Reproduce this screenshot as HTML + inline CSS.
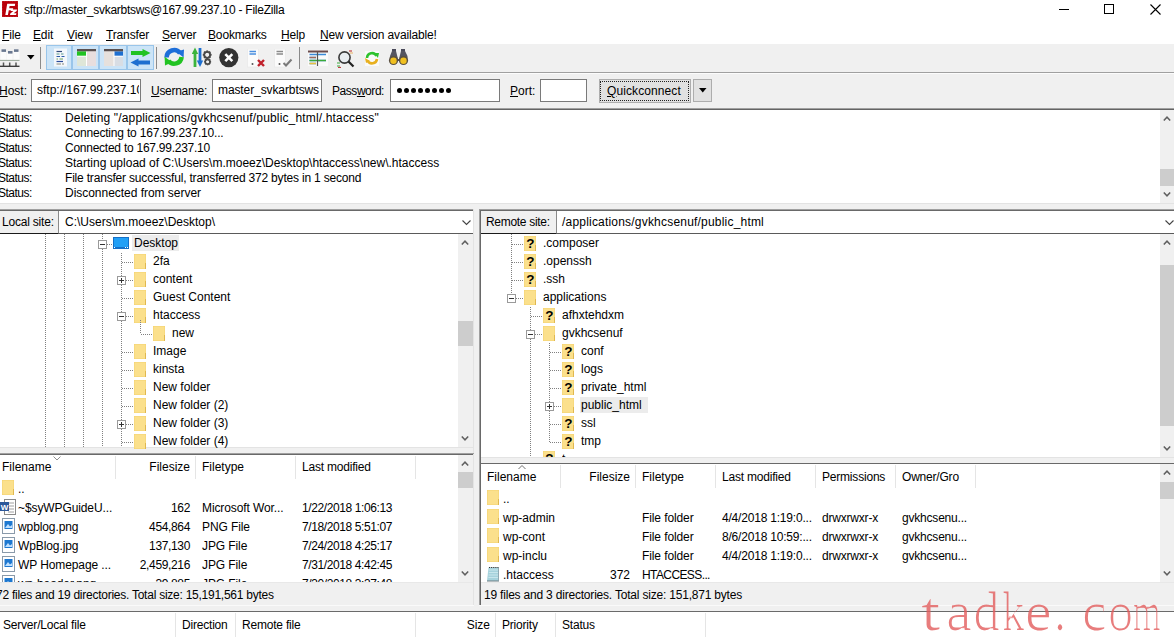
<!DOCTYPE html><html><head><meta charset="utf-8"><style>
body{margin:0;width:1174px;height:643px;overflow:hidden;position:relative;background:#f0f0f0;font-family:"Liberation Sans",sans-serif;font-size:12px;color:#000}
.a{position:absolute}
.t{position:absolute;white-space:nowrap;line-height:12px;font-size:12px}
u{text-decoration:underline;text-underline-offset:1px;text-decoration-thickness:1px}
</style></head><body>
<div class="a" style="left:0px;top:0px;width:1174px;height:44px;background:#fff"></div>
<svg class="a" style="left:2px;top:1px" width="16" height="16" viewBox="0 0 16 16"><rect x="0" y="0" width="16" height="16" fill="#b8000a"/><rect x="0.5" y="0.5" width="15" height="15" fill="none" stroke="#d04040" stroke-width="0.6" stroke-dasharray="0.8 0.8"/><path d="M5.2 2.8 H13.2 L12.8 5 H7.6 L7.2 7.2 H11.2 L10.8 9.3 H6.8 L5.9 14 H3.3Z" fill="#fff"/><path d="M9 8.4 H15 L14.7 10 L11.6 12.3 H14.4 L14.1 14 H8 L8.3 12.4 L11.4 10 H8.7Z" fill="#fff"/></svg>
<div class="t" style="left:24px;top:4px;letter-spacing:-0.25px">sftp://master_svkarbtsws@167.99.237.10 - FileZilla</div>
<div class="a" style="left:1059px;top:9px;width:10px;height:1px;background:#000"></div>
<div class="a" style="left:1104px;top:4px;width:8px;height:8px;border:1px solid #000"></div>
<svg class="a" style="left:1150px;top:4px" width="11" height="11" viewBox="0 0 11 11"><path d="M0.5 0.5L10.5 10.5M10.5 0.5L0.5 10.5" stroke="#000" stroke-width="1.1"/></svg>
<div class="t" style="left:2px;top:29px;letter-spacing:-0.15px"><u>F</u>ile</div>
<div class="t" style="left:33px;top:29px;letter-spacing:-0.15px"><u>E</u>dit</div>
<div class="t" style="left:67px;top:29px;letter-spacing:-0.15px"><u>V</u>iew</div>
<div class="t" style="left:106px;top:29px;letter-spacing:-0.15px"><u>T</u>ransfer</div>
<div class="t" style="left:162px;top:29px;letter-spacing:-0.15px"><u>S</u>erver</div>
<div class="t" style="left:208px;top:29px;letter-spacing:-0.15px"><u>B</u>ookmarks</div>
<div class="t" style="left:281px;top:29px;letter-spacing:-0.15px"><u>H</u>elp</div>
<div class="t" style="left:320px;top:29px;letter-spacing:-0.15px"><u>N</u>ew version available!</div>
<div class="a" style="left:0px;top:44px;width:1174px;height:28px;background:#f0f0f0"></div>
<div class="a" style="left:0px;top:72px;width:1174px;height:1px;background:#a0a0a0"></div>
<svg class="a" style="left:0px;top:47px" width="21" height="21" viewBox="0 0 21 21">
<g fill="#fbfbfb"><rect x="0.5" y="4.5" width="6" height="9"/><rect x="7" y="6" width="5.5" height="8"/><rect x="13.5" y="4.5" width="6" height="9"/></g>
<g fill="#6a7890"><rect x="1.5" y="2.3" width="4.5" height="2.6"/><rect x="8" y="4" width="4.5" height="2.6"/><rect x="14" y="2.3" width="4.5" height="2.6"/></g>
<path d="M0 13.4H19.5" stroke="#8a9a8a" stroke-width="0.9"/>
<path d="M3.5 15.5V19M9.7 15.5V19M16 15.5V19" stroke="#555" stroke-width="1.5"/>
<path d="M0 19.3H19.5" stroke="#333" stroke-width="1.3"/></svg>
<svg class="a" style="left:27px;top:55px" width="8" height="5" viewBox="0 0 8 5"><path d="M0 0H7.5L3.75 4.5Z" fill="#000"/></svg>
<div class="a" style="left:40px;top:47px;width:1px;height:22px;background:#8a8a8a"></div>
<div class="a" style="left:156px;top:47px;width:1px;height:22px;background:#8a8a8a"></div>
<div class="a" style="left:299px;top:47px;width:1px;height:22px;background:#8a8a8a"></div>
<div class="a" style="left:46px;top:45px;width:26px;height:25px;background:#cce4f7;box-sizing:border-box;border:1px solid #99c5ea"></div>
<div class="a" style="left:72px;top:45px;width:27px;height:25px;background:#cce4f7;box-sizing:border-box;border:1px solid #99c5ea"></div>
<div class="a" style="left:99px;top:45px;width:28px;height:25px;background:#cce4f7;box-sizing:border-box;border:1px solid #99c5ea"></div>
<div class="a" style="left:127px;top:45px;width:27px;height:25px;background:#cce4f7;box-sizing:border-box;border:1px solid #99c5ea"></div>
<svg class="a" style="left:53px;top:48px" width="15" height="19" viewBox="0 0 15 19"><rect x="1" y="0.5" width="13" height="18" fill="#f4f7fb"/>
<path d="M3.5 3.5H9" stroke="#304a7a" stroke-width="1.2"/>
<path d="M3.5 6H6.5M8 6H10.5" stroke="#5a9a8a" stroke-width="1.2"/>
<path d="M3.5 8.5H7M8.5 8.5H11.5" stroke="#2a5aa8" stroke-width="1.2"/>
<path d="M3.5 11H5M6.5 11H10" stroke="#6aa060" stroke-width="1.2"/>
<path d="M3.5 13.5H10" stroke="#2a4a9a" stroke-width="1.2"/>
<path d="M3.5 16H8M9 16H11" stroke="#8a8a7a" stroke-width="1.2"/></svg>
<svg class="a" style="left:77px;top:49px" width="19" height="17" viewBox="0 0 19 17"><rect x="0" y="0" width="19" height="17" fill="#e8e4e0"/>
<rect x="0" y="0" width="19" height="2.5" fill="#5a5050"/>
<rect x="0" y="2.5" width="9.5" height="4.5" fill="#22c322"/>
<rect x="0" y="7.5" width="9" height="9.5" fill="#dfe6d8"/>
<rect x="10" y="2.5" width="9" height="14.5" fill="#e8dede"/>
<path d="M9.5 2.5V17M0 7.2H9.5" stroke="#fff" stroke-width="1"/></svg>
<svg class="a" style="left:104px;top:49px" width="19" height="17" viewBox="0 0 19 17"><rect x="0" y="0" width="19" height="17" fill="#e6e2de"/>
<rect x="0" y="0" width="19" height="2.5" fill="#5a5050"/>
<rect x="10" y="2.5" width="9" height="4.5" fill="#1e6fd0"/>
<rect x="0" y="2.5" width="9.5" height="14.5" fill="#e6e0dc"/>
<rect x="10" y="7.5" width="9" height="9.5" fill="#d8dde4"/>
<path d="M10 2.5V17M10 7.2H19" stroke="#fff" stroke-width="1"/></svg>
<svg class="a" style="left:130px;top:49px" width="21" height="18" viewBox="0 0 21 18"><path d="M1 2H12.5V0L20.5 4L12.5 8V6H1Z" fill="#22c322"/>
<path d="M20 11.5H8.5V9.5L0.5 13.5L8.5 17.5V15.5H20Z" fill="#1e6fd0"/></svg>
<svg class="a" style="left:164px;top:47px" width="21" height="21" viewBox="0 0 21 21"><path d="M2.6 10.5 A7.4 7.4 0 0 1 16 6.2" stroke="#1e6fd9" stroke-width="4.6" fill="none"/>
<path d="M12.2 4.8 L20 2.6 L19.6 10.6Z" fill="#1e6fd9"/>
<path d="M17.6 10 A7.4 7.4 0 0 1 4.4 13.8" stroke="#22c322" stroke-width="4.6" fill="none"/>
<path d="M0.6 9.8 L1 18.6 L8.2 15.2Z" fill="#22c322"/></svg>
<svg class="a" style="left:192px;top:47px" width="20" height="21" viewBox="0 0 20 21"><path d="M3 20V5" stroke="#3cb43c" stroke-width="2.8"/><path d="M-0.2 7 L3 0.5 L6.2 7Z" fill="#3cb43c"/>
<path d="M8 1V15" stroke="#1e6fd0" stroke-width="2.8"/><path d="M4.8 13.5 L8 20 L11.2 13.5Z" fill="#1e6fd0"/>
<g transform="translate(15.2,7.8)" fill="#4a4a4a"><circle r="3" fill="none" stroke="#4a4a4a" stroke-width="1.8"/><rect x="-0.9" y="-4.4" width="1.8" height="2.2" transform="rotate(0)"/><rect x="-0.9" y="-4.4" width="1.8" height="2.2" transform="rotate(45)"/><rect x="-0.9" y="-4.4" width="1.8" height="2.2" transform="rotate(90)"/><rect x="-0.9" y="-4.4" width="1.8" height="2.2" transform="rotate(135)"/><rect x="-0.9" y="-4.4" width="1.8" height="2.2" transform="rotate(180)"/><rect x="-0.9" y="-4.4" width="1.8" height="2.2" transform="rotate(225)"/><rect x="-0.9" y="-4.4" width="1.8" height="2.2" transform="rotate(270)"/><rect x="-0.9" y="-4.4" width="1.8" height="2.2" transform="rotate(315)"/></g>
<g transform="translate(15.6,14.8) scale(0.8)" fill="#4a4a4a"><circle r="3" fill="none" stroke="#4a4a4a" stroke-width="2"/><rect x="-0.9" y="-4.4" width="1.8" height="2.2" transform="rotate(0)"/><rect x="-0.9" y="-4.4" width="1.8" height="2.2" transform="rotate(45)"/><rect x="-0.9" y="-4.4" width="1.8" height="2.2" transform="rotate(90)"/><rect x="-0.9" y="-4.4" width="1.8" height="2.2" transform="rotate(135)"/><rect x="-0.9" y="-4.4" width="1.8" height="2.2" transform="rotate(180)"/><rect x="-0.9" y="-4.4" width="1.8" height="2.2" transform="rotate(225)"/><rect x="-0.9" y="-4.4" width="1.8" height="2.2" transform="rotate(270)"/><rect x="-0.9" y="-4.4" width="1.8" height="2.2" transform="rotate(315)"/></g></svg>
<svg class="a" style="left:219px;top:48px" width="20" height="20" viewBox="0 0 20 20"><circle cx="9.8" cy="9.6" r="9.6" fill="#333"/>
<path d="M6.3 6.1L13.3 13.1M13.3 6.1L6.3 13.1" stroke="#fff" stroke-width="2.6"/></svg>
<svg class="a" style="left:247px;top:49px" width="19" height="19" viewBox="0 0 19 19"><rect x="0.5" y="0" width="11" height="18" fill="#fbfbfb" stroke="#e6e6e6" stroke-width="0.6"/>
<path d="M2.5 2.5H9M2.5 5H9" stroke="#4a8ee0" stroke-width="1.5"/>
<circle cx="5.5" cy="15" r="1" fill="#555"/>
<path d="M11 11L17 17M17 11L11 17" stroke="#c0202a" stroke-width="2.4"/></svg>
<svg class="a" style="left:274px;top:49px" width="19" height="19" viewBox="0 0 19 19"><rect x="0.5" y="0" width="11" height="18" fill="#fbfbfb" stroke="#e6e6e6" stroke-width="0.6"/>
<path d="M2.5 2.5H9M2.5 5H9" stroke="#8a8a8a" stroke-width="1.5"/>
<circle cx="5.5" cy="15" r="1" fill="#555"/>
<path d="M9.5 14L12 16.5L17.5 10.5" stroke="#7a7a7a" stroke-width="2" fill="none"/></svg>
<svg class="a" style="left:308px;top:50px" width="20" height="16" viewBox="0 0 20 16"><rect x="0" y="0" width="20" height="16" fill="#fafafa"/>
<rect x="0" y="0.5" width="20" height="2" fill="#6a4a4a"/>
<path d="M1.5 4.5H18M1.5 7.5H8M1.5 10.5H8M10 10.5H18M1.5 13.5H8" stroke-width="1.4" stroke="#3a8ad8"/>
<path d="M1.5 7.5H8" stroke="#a06a5a" stroke-width="1.4"/>
<path d="M1.5 10.5H18" stroke="#3aaa3a" stroke-width="1.4"/>
<path d="M1.5 13.5H8" stroke="#e8c040" stroke-width="1.6"/>
<path d="M9.5 2V16" stroke="#555" stroke-width="1.2"/></svg>
<svg class="a" style="left:336px;top:49px" width="20" height="19" viewBox="0 0 20 19"><circle cx="8.5" cy="8.5" r="5.6" fill="#e8ecf0" stroke="#3a3a3a" stroke-width="1.6"/>
<path d="M12.5 12.5L17.5 17.5" stroke="#222" stroke-width="2.2"/>
<path d="M1 14H4M1 17H4" stroke="#3aaa3a" stroke-width="1.2"/><path d="M2 18.5H5" stroke="#c04040" stroke-width="1.2"/>
<path d="M13 2H16" stroke="#c04040" stroke-width="1.2"/><path d="M14 4H17" stroke="#e8b060" stroke-width="1"/></svg>
<svg class="a" style="left:364px;top:50px" width="16" height="17" viewBox="0 0 16 17"><rect x="1" y="1" width="14" height="15" fill="#fafafa"/>
<path d="M3 8 A5 5 0 0 1 12.5 6" stroke="#2ec22e" stroke-width="2.6" fill="none"/>
<path d="M10 3L15 3L14 8Z" fill="#2ec22e"/>
<path d="M13 9 A5 5 0 0 1 3.5 10.5" stroke="#e8b020" stroke-width="2.6" fill="none"/>
<path d="M1 8L2 13L6 11Z" fill="#e8b020"/></svg>
<svg class="a" style="left:388px;top:49px" width="21" height="17" viewBox="0 0 21 17"><path d="M4 0H8V8H4Z" fill="#4a4a5a"/><path d="M13 0H17V8H13Z" fill="#4a4a5a"/>
<path d="M2 7L4 2H8L10 10H11L13 2H17L19.5 7V12H1.5Z" fill="#555560"/>
<circle cx="5.5" cy="11.5" r="4.6" fill="#5a5040"/><circle cx="15.5" cy="11.5" r="4.6" fill="#5a5040"/>
<circle cx="5.5" cy="11.8" r="3.2" fill="#f0c020"/><circle cx="15.5" cy="11.8" r="3.2" fill="#f0c020"/></svg>
<div class="a" style="left:0px;top:73px;width:1174px;height:35px;background:#f0f0f0"></div>
<div class="a" style="left:0px;top:73px;width:1174px;height:1px;background:#fcfcfc"></div>
<div class="a" style="left:0px;top:108px;width:1174px;height:1px;background:#a0a0a0"></div>
<div class="a" style="left:0px;top:109px;width:1174px;height:1px;background:#646464"></div>
<div class="t" style="left:-1px;top:85px;"><u>H</u>ost:</div>
<div class="a" style="left:31px;top:79px;width:110px;height:23px;background:#fff;box-sizing:border-box;border:1px solid #7a7a7a"></div>
<div class="a" style="left:32px;top:80px;width:107px;height:21px;overflow:hidden"><div class="t" style="left:5px;top:4px;">sftp://167.99.237.10</div></div>
<div class="t" style="left:151px;top:85px;letter-spacing:-0.3px"><u>U</u>sername:</div>
<div class="a" style="left:212px;top:79px;width:110px;height:23px;background:#fff;box-sizing:border-box;border:1px solid #7a7a7a"></div>
<div class="a" style="left:213px;top:80px;width:107px;height:21px;overflow:hidden"><div class="t" style="left:5px;top:4px;letter-spacing:-0.1px">master_svkarbtsws</div></div>
<div class="t" style="left:332px;top:85px;letter-spacing:-0.45px">Pass<u>w</u>ord:</div>
<div class="a" style="left:390px;top:79px;width:110px;height:23px;background:#fff;box-sizing:border-box;border:1px solid #7a7a7a"></div>
<div class="a" style="left:397px;top:88px;width:5px;height:5px;background:#000;border-radius:50%"></div>
<div class="a" style="left:404px;top:88px;width:5px;height:5px;background:#000;border-radius:50%"></div>
<div class="a" style="left:411px;top:88px;width:5px;height:5px;background:#000;border-radius:50%"></div>
<div class="a" style="left:418px;top:88px;width:5px;height:5px;background:#000;border-radius:50%"></div>
<div class="a" style="left:425px;top:88px;width:5px;height:5px;background:#000;border-radius:50%"></div>
<div class="a" style="left:432px;top:88px;width:5px;height:5px;background:#000;border-radius:50%"></div>
<div class="a" style="left:439px;top:88px;width:5px;height:5px;background:#000;border-radius:50%"></div>
<div class="a" style="left:446px;top:88px;width:5px;height:5px;background:#000;border-radius:50%"></div>
<div class="t" style="left:510px;top:85px;"><u>P</u>ort:</div>
<div class="a" style="left:540px;top:79px;width:47px;height:23px;background:#fff;box-sizing:border-box;border:1px solid #7a7a7a"></div>
<div class="a" style="left:599px;top:79px;width:92px;height:24px;background:#e1e1e1;box-sizing:border-box;border:1px solid #adadad"></div>
<div class="a" style="left:600px;top:81px;width:89px;height:20px;box-sizing:border-box;border:1px dotted #222"></div>
<div class="t" style="left:607px;top:85px;letter-spacing:0.1px"><u>Q</u>uickconnect</div>
<div class="a" style="left:693px;top:79px;width:19px;height:23px;background:#e1e1e1;box-sizing:border-box;border:1px solid #adadad"></div>
<svg class="a" style="left:699px;top:88px" width="8" height="5" viewBox="0 0 8 5"><path d="M0 0H7.5L3.75 4.5Z" fill="#000"/></svg>
<div class="a" style="left:0px;top:110px;width:1174px;height:93px;background:#fff"></div>
<div class="a" style="left:0px;top:203px;width:1174px;height:1px;background:#e3e3e3"></div>
<div class="t" style="left:-2px;top:112px;letter-spacing:-0.5px">Status:</div>
<div class="t" style="left:65px;top:112px;letter-spacing:0.16px">Deleting &quot;/applications/gvkhcsenuf/public_html/.htaccess&quot;</div>
<div class="t" style="left:-2px;top:127px;letter-spacing:-0.5px">Status:</div>
<div class="t" style="left:65px;top:127px;letter-spacing:-0.19px">Connecting to 167.99.237.10...</div>
<div class="t" style="left:-2px;top:142px;letter-spacing:-0.5px">Status:</div>
<div class="t" style="left:65px;top:142px;letter-spacing:-0.25px">Connected to 167.99.237.10</div>
<div class="t" style="left:-2px;top:157px;letter-spacing:-0.5px">Status:</div>
<div class="t" style="left:65px;top:157px;letter-spacing:0px">Starting upload of C:\Users\m.moeez\Desktop\htaccess\new\.htaccess</div>
<div class="t" style="left:-2px;top:172px;letter-spacing:-0.5px">Status:</div>
<div class="t" style="left:65px;top:172px;letter-spacing:-0.19px">File transfer successful, transferred 372 bytes in 1 second</div>
<div class="t" style="left:-2px;top:187px;letter-spacing:-0.5px">Status:</div>
<div class="t" style="left:65px;top:187px;letter-spacing:-0.03px">Disconnected from server</div>
<div class="a" style="left:1160px;top:110px;width:15px;height:93px;background:#f0f0f0"></div>
<div class="a" style="left:1160px;top:169px;width:15px;height:17px;background:#cdcdcd"></div>
<svg class="a" style="left:1163px;top:116px" width="8" height="5" viewBox="0 0 8 5"><path d="M0.8 4.5L4 1.2L7.2 4.5" stroke="#606060" stroke-width="1.5" fill="none"/></svg>
<svg class="a" style="left:1163px;top:192px" width="8" height="5" viewBox="0 0 8 5"><path d="M0.8 0.5L4 3.8L7.2 0.5" stroke="#606060" stroke-width="1.5" fill="none"/></svg>
<div class="a" style="left:0px;top:209px;width:474px;height:1px;background:#a0a0a0"></div>
<div class="a" style="left:0px;top:210px;width:474px;height:1px;background:#696969"></div>
<div class="a" style="left:479px;top:209px;width:695px;height:1px;background:#a0a0a0"></div>
<div class="a" style="left:480px;top:210px;width:694px;height:1px;background:#696969"></div>
<div class="a" style="left:479px;top:209px;width:1px;height:396px;background:#a0a0a0"></div>
<div class="a" style="left:480px;top:210px;width:1px;height:395px;background:#696969"></div>
<div class="a" style="left:0px;top:211px;width:58px;height:22px;background:#f0f0f0"></div>
<div class="a" style="left:58px;top:211px;width:415px;height:22px;background:#fff"></div>
<div class="a" style="left:0px;top:233px;width:58px;height:1px;background:#1a1a1a"></div>
<div class="a" style="left:58px;top:233px;width:415px;height:1px;background:#5a5a5a"></div>
<div class="a" style="left:58px;top:211px;width:1px;height:22px;background:#8a8a8a"></div>
<div class="t" style="left:2px;top:216px;letter-spacing:-0.2px">Local site:</div>
<div class="t" style="left:65px;top:216px;">C:\Users\m.moeez\Desktop\</div>
<svg class="a" style="left:462px;top:220px" width="9" height="6" viewBox="0 0 9 6"><path d="M0.5 0.5L4.5 4.5L8.5 0.5" stroke="#444" stroke-width="1.1" fill="none"/></svg>
<div class="a" style="left:473px;top:209px;width:1px;height:396px;background:#e3e3e3"></div>
<div class="a" style="left:481px;top:211px;width:75px;height:22px;background:#f0f0f0"></div>
<div class="a" style="left:556px;top:211px;width:618px;height:22px;background:#fff"></div>
<div class="a" style="left:481px;top:233px;width:75px;height:1px;background:#1a1a1a"></div>
<div class="a" style="left:556px;top:233px;width:618px;height:1px;background:#5a5a5a"></div>
<div class="a" style="left:556px;top:211px;width:1px;height:22px;background:#8a8a8a"></div>
<div class="t" style="left:486px;top:216px;letter-spacing:-0.3px">Remote site:</div>
<div class="t" style="left:562px;top:216px;letter-spacing:0.2px">/applications/gvkhcsenuf/public_html</div>
<svg class="a" style="left:1165px;top:220px" width="9" height="6" viewBox="0 0 9 6"><path d="M0.5 0.5L4.5 4.5L8.5 0.5" stroke="#444" stroke-width="1.1" fill="none"/></svg>
<div class="a" style="left:0px;top:234px;width:473px;height:213px;background:#fff"></div>
<div class="a" style="left:0px;top:447px;width:474px;height:1px;background:#e3e3e3"></div>
<div class="a" style="left:45px;top:234px;width:1px;height:213px;background-image:linear-gradient(#808080 50%,transparent 50%);background-size:1px 2px"></div>
<div class="a" style="left:64px;top:234px;width:1px;height:213px;background-image:linear-gradient(#808080 50%,transparent 50%);background-size:1px 2px"></div>
<div class="a" style="left:83px;top:234px;width:1px;height:213px;background-image:linear-gradient(#808080 50%,transparent 50%);background-size:1px 2px"></div>
<div class="a" style="left:102px;top:234px;width:1px;height:6px;background-image:linear-gradient(#808080 50%,transparent 50%);background-size:1px 2px"></div>
<div class="a" style="left:102px;top:249px;width:1px;height:198px;background-image:linear-gradient(#808080 50%,transparent 50%);background-size:1px 2px"></div>
<svg class="a" style="left:98px;top:240px" width="9" height="9" viewBox="0 0 9 9"><rect x="0.5" y="0.5" width="8" height="8" fill="#fff" stroke="#9a9a9a"/><path d="M2 4.5H7" stroke="#333"/></svg>
<div class="a" style="left:107px;top:244px;width:6px;height:1px;background-image:linear-gradient(90deg,#808080 50%,transparent 50%);background-size:2px 1px"></div>
<svg class="a" style="left:113px;top:237px" width="16" height="12" viewBox="0 0 16 12"><rect x="0" y="0" width="16" height="12" fill="#1570c8"/><rect x="1" y="1" width="14" height="9" fill="#22a0f6"/><rect x="1" y="10" width="1" height="1" fill="#fff"/><rect x="12" y="10" width="1" height="1" fill="#fff"/><rect x="14" y="10" width="1" height="1" fill="#fff"/></svg>
<div class="a" style="left:132px;top:235px;width:47px;height:16px;background:#ececec"></div>
<div class="t" style="left:134px;top:237px;">Desktop</div>
<div class="a" style="left:121px;top:253px;width:1px;height:194px;background-image:linear-gradient(#808080 50%,transparent 50%);background-size:1px 2px"></div>
<div class="a" style="left:122px;top:262px;width:11px;height:1px;background-image:linear-gradient(90deg,#808080 50%,transparent 50%);background-size:2px 1px"></div>
<svg class="a" style="left:134px;top:254px" width="12" height="15" viewBox="0 0 12 15"><rect x="0" y="0" width="12" height="15" fill="#fbe08c"/><rect x="0" y="0" width="12" height="15" fill="none" stroke="#f2cf6a" stroke-width="0.8"/><path d="M11.5 9V15" stroke="#e0b850" stroke-width="1"/></svg>
<div class="t" style="left:153px;top:255px;">2fa</div>
<svg class="a" style="left:117px;top:276px" width="9" height="9" viewBox="0 0 9 9"><rect x="0.5" y="0.5" width="8" height="8" fill="#fff" stroke="#9a9a9a"/><path d="M2 4.5H7" stroke="#333"/><path d="M4.5 2V7" stroke="#333"/></svg>
<div class="a" style="left:126px;top:280px;width:7px;height:1px;background-image:linear-gradient(90deg,#808080 50%,transparent 50%);background-size:2px 1px"></div>
<svg class="a" style="left:134px;top:272px" width="12" height="15" viewBox="0 0 12 15"><rect x="0" y="0" width="12" height="15" fill="#fbe08c"/><rect x="0" y="0" width="12" height="15" fill="none" stroke="#f2cf6a" stroke-width="0.8"/><path d="M11.5 9V15" stroke="#e0b850" stroke-width="1"/></svg>
<div class="t" style="left:153px;top:273px;">content</div>
<div class="a" style="left:122px;top:298px;width:11px;height:1px;background-image:linear-gradient(90deg,#808080 50%,transparent 50%);background-size:2px 1px"></div>
<svg class="a" style="left:134px;top:290px" width="12" height="15" viewBox="0 0 12 15"><rect x="0" y="0" width="12" height="15" fill="#fbe08c"/><rect x="0" y="0" width="12" height="15" fill="none" stroke="#f2cf6a" stroke-width="0.8"/><path d="M11.5 9V15" stroke="#e0b850" stroke-width="1"/></svg>
<div class="t" style="left:153px;top:291px;">Guest Content</div>
<svg class="a" style="left:117px;top:312px" width="9" height="9" viewBox="0 0 9 9"><rect x="0.5" y="0.5" width="8" height="8" fill="#fff" stroke="#9a9a9a"/><path d="M2 4.5H7" stroke="#333"/></svg>
<div class="a" style="left:126px;top:316px;width:7px;height:1px;background-image:linear-gradient(90deg,#808080 50%,transparent 50%);background-size:2px 1px"></div>
<svg class="a" style="left:134px;top:308px" width="12" height="15" viewBox="0 0 12 15"><rect x="0" y="0" width="12" height="15" fill="#fbe08c"/><rect x="0" y="0" width="12" height="15" fill="none" stroke="#f2cf6a" stroke-width="0.8"/><path d="M11.5 9V15" stroke="#e0b850" stroke-width="1"/></svg>
<div class="t" style="left:153px;top:309px;">htaccess</div>
<div class="a" style="left:141px;top:334px;width:11px;height:1px;background-image:linear-gradient(90deg,#808080 50%,transparent 50%);background-size:2px 1px"></div>
<svg class="a" style="left:153px;top:326px" width="12" height="15" viewBox="0 0 12 15"><rect x="0" y="0" width="12" height="15" fill="#fbe08c"/><rect x="0" y="0" width="12" height="15" fill="none" stroke="#f2cf6a" stroke-width="0.8"/><path d="M11.5 9V15" stroke="#e0b850" stroke-width="1"/></svg>
<div class="t" style="left:172px;top:327px;">new</div>
<div class="a" style="left:122px;top:352px;width:11px;height:1px;background-image:linear-gradient(90deg,#808080 50%,transparent 50%);background-size:2px 1px"></div>
<svg class="a" style="left:134px;top:344px" width="12" height="15" viewBox="0 0 12 15"><rect x="0" y="0" width="12" height="15" fill="#fbe08c"/><rect x="0" y="0" width="12" height="15" fill="none" stroke="#f2cf6a" stroke-width="0.8"/><path d="M11.5 9V15" stroke="#e0b850" stroke-width="1"/></svg>
<div class="t" style="left:153px;top:345px;">Image</div>
<div class="a" style="left:122px;top:370px;width:11px;height:1px;background-image:linear-gradient(90deg,#808080 50%,transparent 50%);background-size:2px 1px"></div>
<svg class="a" style="left:134px;top:362px" width="12" height="15" viewBox="0 0 12 15"><rect x="0" y="0" width="12" height="15" fill="#fbe08c"/><rect x="0" y="0" width="12" height="15" fill="none" stroke="#f2cf6a" stroke-width="0.8"/><path d="M11.5 9V15" stroke="#e0b850" stroke-width="1"/></svg>
<div class="t" style="left:153px;top:363px;">kinsta</div>
<div class="a" style="left:122px;top:388px;width:11px;height:1px;background-image:linear-gradient(90deg,#808080 50%,transparent 50%);background-size:2px 1px"></div>
<svg class="a" style="left:134px;top:380px" width="12" height="15" viewBox="0 0 12 15"><rect x="0" y="0" width="12" height="15" fill="#fbe08c"/><rect x="0" y="0" width="12" height="15" fill="none" stroke="#f2cf6a" stroke-width="0.8"/><path d="M11.5 9V15" stroke="#e0b850" stroke-width="1"/></svg>
<div class="t" style="left:153px;top:381px;">New folder</div>
<div class="a" style="left:122px;top:406px;width:11px;height:1px;background-image:linear-gradient(90deg,#808080 50%,transparent 50%);background-size:2px 1px"></div>
<svg class="a" style="left:134px;top:398px" width="12" height="15" viewBox="0 0 12 15"><rect x="0" y="0" width="12" height="15" fill="#fbe08c"/><rect x="0" y="0" width="12" height="15" fill="none" stroke="#f2cf6a" stroke-width="0.8"/><path d="M11.5 9V15" stroke="#e0b850" stroke-width="1"/></svg>
<div class="t" style="left:153px;top:399px;">New folder (2)</div>
<svg class="a" style="left:117px;top:420px" width="9" height="9" viewBox="0 0 9 9"><rect x="0.5" y="0.5" width="8" height="8" fill="#fff" stroke="#9a9a9a"/><path d="M2 4.5H7" stroke="#333"/><path d="M4.5 2V7" stroke="#333"/></svg>
<div class="a" style="left:126px;top:424px;width:7px;height:1px;background-image:linear-gradient(90deg,#808080 50%,transparent 50%);background-size:2px 1px"></div>
<svg class="a" style="left:134px;top:416px" width="12" height="15" viewBox="0 0 12 15"><rect x="0" y="0" width="12" height="15" fill="#fbe08c"/><rect x="0" y="0" width="12" height="15" fill="none" stroke="#f2cf6a" stroke-width="0.8"/><path d="M11.5 9V15" stroke="#e0b850" stroke-width="1"/></svg>
<div class="t" style="left:153px;top:417px;">New folder (3)</div>
<div class="a" style="left:122px;top:442px;width:11px;height:1px;background-image:linear-gradient(90deg,#808080 50%,transparent 50%);background-size:2px 1px"></div>
<svg class="a" style="left:134px;top:434px" width="12" height="15" viewBox="0 0 12 15"><rect x="0" y="0" width="12" height="15" fill="#fbe08c"/><rect x="0" y="0" width="12" height="15" fill="none" stroke="#f2cf6a" stroke-width="0.8"/><path d="M11.5 9V15" stroke="#e0b850" stroke-width="1"/></svg>
<div class="t" style="left:153px;top:435px;">New folder (4)</div>
<div class="a" style="left:140px;top:320px;width:1px;height:13px;background-image:linear-gradient(#808080 50%,transparent 50%);background-size:1px 2px"></div>
<div class="a" style="left:458px;top:234px;width:15px;height:213px;background:#f0f0f0"></div>
<div class="a" style="left:458px;top:321px;width:15px;height:25px;background:#cdcdcd"></div>
<svg class="a" style="left:461px;top:240px" width="8" height="5" viewBox="0 0 8 5"><path d="M0.8 4.5L4 1.2L7.2 4.5" stroke="#606060" stroke-width="1.5" fill="none"/></svg>
<svg class="a" style="left:461px;top:436px" width="8" height="5" viewBox="0 0 8 5"><path d="M0.8 0.5L4 3.8L7.2 0.5" stroke="#606060" stroke-width="1.5" fill="none"/></svg>
<div class="a" style="left:481px;top:234px;width:679px;height:223px;background:#fff"></div>
<div class="a" style="left:481px;top:457px;width:693px;height:1px;background:#e3e3e3"></div>
<div class="a" style="left:511px;top:234px;width:1px;height:64px;background-image:linear-gradient(#808080 50%,transparent 50%);background-size:1px 2px"></div>
<div class="a" style="left:530px;top:307px;width:1px;height:150px;background-image:linear-gradient(#808080 50%,transparent 50%);background-size:1px 2px"></div>
<div class="a" style="left:549px;top:343px;width:1px;height:99px;background-image:linear-gradient(#808080 50%,transparent 50%);background-size:1px 2px"></div>
<div class="a" style="left:512px;top:244px;width:11px;height:1px;background-image:linear-gradient(90deg,#808080 50%,transparent 50%);background-size:2px 1px"></div>
<svg class="a" style="left:524px;top:236px" width="12" height="15" viewBox="0 0 12 15"><rect x="0" y="0" width="12" height="15" fill="#fbe08c"/><rect x="0" y="0" width="12" height="15" fill="none" stroke="#f2cf6a" stroke-width="0.8"/><path d="M11.5 9V15" stroke="#e0b850" stroke-width="1"/><text x="2.3" y="12.3" font-family="Liberation Sans" font-weight="bold" font-size="13.5" fill="#000">?</text></svg>
<div class="t" style="left:543px;top:237px;">.composer</div>
<div class="a" style="left:512px;top:262px;width:11px;height:1px;background-image:linear-gradient(90deg,#808080 50%,transparent 50%);background-size:2px 1px"></div>
<svg class="a" style="left:524px;top:254px" width="12" height="15" viewBox="0 0 12 15"><rect x="0" y="0" width="12" height="15" fill="#fbe08c"/><rect x="0" y="0" width="12" height="15" fill="none" stroke="#f2cf6a" stroke-width="0.8"/><path d="M11.5 9V15" stroke="#e0b850" stroke-width="1"/><text x="2.3" y="12.3" font-family="Liberation Sans" font-weight="bold" font-size="13.5" fill="#000">?</text></svg>
<div class="t" style="left:543px;top:255px;">.openssh</div>
<div class="a" style="left:512px;top:280px;width:11px;height:1px;background-image:linear-gradient(90deg,#808080 50%,transparent 50%);background-size:2px 1px"></div>
<svg class="a" style="left:524px;top:272px" width="12" height="15" viewBox="0 0 12 15"><rect x="0" y="0" width="12" height="15" fill="#fbe08c"/><rect x="0" y="0" width="12" height="15" fill="none" stroke="#f2cf6a" stroke-width="0.8"/><path d="M11.5 9V15" stroke="#e0b850" stroke-width="1"/><text x="2.3" y="12.3" font-family="Liberation Sans" font-weight="bold" font-size="13.5" fill="#000">?</text></svg>
<div class="t" style="left:543px;top:273px;">.ssh</div>
<svg class="a" style="left:507px;top:294px" width="9" height="9" viewBox="0 0 9 9"><rect x="0.5" y="0.5" width="8" height="8" fill="#fff" stroke="#9a9a9a"/><path d="M2 4.5H7" stroke="#333"/></svg>
<div class="a" style="left:516px;top:298px;width:7px;height:1px;background-image:linear-gradient(90deg,#808080 50%,transparent 50%);background-size:2px 1px"></div>
<svg class="a" style="left:524px;top:290px" width="12" height="15" viewBox="0 0 12 15"><rect x="0" y="0" width="12" height="15" fill="#fbe08c"/><rect x="0" y="0" width="12" height="15" fill="none" stroke="#f2cf6a" stroke-width="0.8"/><path d="M11.5 9V15" stroke="#e0b850" stroke-width="1"/></svg>
<div class="t" style="left:543px;top:291px;">applications</div>
<div class="a" style="left:531px;top:316px;width:11px;height:1px;background-image:linear-gradient(90deg,#808080 50%,transparent 50%);background-size:2px 1px"></div>
<svg class="a" style="left:543px;top:308px" width="12" height="15" viewBox="0 0 12 15"><rect x="0" y="0" width="12" height="15" fill="#fbe08c"/><rect x="0" y="0" width="12" height="15" fill="none" stroke="#f2cf6a" stroke-width="0.8"/><path d="M11.5 9V15" stroke="#e0b850" stroke-width="1"/><text x="2.3" y="12.3" font-family="Liberation Sans" font-weight="bold" font-size="13.5" fill="#000">?</text></svg>
<div class="t" style="left:562px;top:309px;">afhxtehdxm</div>
<svg class="a" style="left:526px;top:330px" width="9" height="9" viewBox="0 0 9 9"><rect x="0.5" y="0.5" width="8" height="8" fill="#fff" stroke="#9a9a9a"/><path d="M2 4.5H7" stroke="#333"/></svg>
<div class="a" style="left:535px;top:334px;width:7px;height:1px;background-image:linear-gradient(90deg,#808080 50%,transparent 50%);background-size:2px 1px"></div>
<svg class="a" style="left:543px;top:326px" width="12" height="15" viewBox="0 0 12 15"><rect x="0" y="0" width="12" height="15" fill="#fbe08c"/><rect x="0" y="0" width="12" height="15" fill="none" stroke="#f2cf6a" stroke-width="0.8"/><path d="M11.5 9V15" stroke="#e0b850" stroke-width="1"/></svg>
<div class="t" style="left:562px;top:327px;">gvkhcsenuf</div>
<div class="a" style="left:550px;top:352px;width:11px;height:1px;background-image:linear-gradient(90deg,#808080 50%,transparent 50%);background-size:2px 1px"></div>
<svg class="a" style="left:562px;top:344px" width="12" height="15" viewBox="0 0 12 15"><rect x="0" y="0" width="12" height="15" fill="#fbe08c"/><rect x="0" y="0" width="12" height="15" fill="none" stroke="#f2cf6a" stroke-width="0.8"/><path d="M11.5 9V15" stroke="#e0b850" stroke-width="1"/><text x="2.3" y="12.3" font-family="Liberation Sans" font-weight="bold" font-size="13.5" fill="#000">?</text></svg>
<div class="t" style="left:581px;top:345px;">conf</div>
<div class="a" style="left:550px;top:370px;width:11px;height:1px;background-image:linear-gradient(90deg,#808080 50%,transparent 50%);background-size:2px 1px"></div>
<svg class="a" style="left:562px;top:362px" width="12" height="15" viewBox="0 0 12 15"><rect x="0" y="0" width="12" height="15" fill="#fbe08c"/><rect x="0" y="0" width="12" height="15" fill="none" stroke="#f2cf6a" stroke-width="0.8"/><path d="M11.5 9V15" stroke="#e0b850" stroke-width="1"/><text x="2.3" y="12.3" font-family="Liberation Sans" font-weight="bold" font-size="13.5" fill="#000">?</text></svg>
<div class="t" style="left:581px;top:363px;">logs</div>
<div class="a" style="left:550px;top:388px;width:11px;height:1px;background-image:linear-gradient(90deg,#808080 50%,transparent 50%);background-size:2px 1px"></div>
<svg class="a" style="left:562px;top:380px" width="12" height="15" viewBox="0 0 12 15"><rect x="0" y="0" width="12" height="15" fill="#fbe08c"/><rect x="0" y="0" width="12" height="15" fill="none" stroke="#f2cf6a" stroke-width="0.8"/><path d="M11.5 9V15" stroke="#e0b850" stroke-width="1"/><text x="2.3" y="12.3" font-family="Liberation Sans" font-weight="bold" font-size="13.5" fill="#000">?</text></svg>
<div class="t" style="left:581px;top:381px;">private_html</div>
<svg class="a" style="left:545px;top:402px" width="9" height="9" viewBox="0 0 9 9"><rect x="0.5" y="0.5" width="8" height="8" fill="#fff" stroke="#9a9a9a"/><path d="M2 4.5H7" stroke="#333"/><path d="M4.5 2V7" stroke="#333"/></svg>
<div class="a" style="left:554px;top:406px;width:7px;height:1px;background-image:linear-gradient(90deg,#808080 50%,transparent 50%);background-size:2px 1px"></div>
<div class="a" style="left:580px;top:397px;width:68px;height:16px;background:#ececec"></div>
<svg class="a" style="left:562px;top:398px" width="12" height="15" viewBox="0 0 12 15"><rect x="0" y="0" width="12" height="15" fill="#fbe08c"/><rect x="0" y="0" width="12" height="15" fill="none" stroke="#f2cf6a" stroke-width="0.8"/><path d="M11.5 9V15" stroke="#e0b850" stroke-width="1"/></svg>
<div class="t" style="left:581px;top:399px;">public_html</div>
<div class="a" style="left:550px;top:424px;width:11px;height:1px;background-image:linear-gradient(90deg,#808080 50%,transparent 50%);background-size:2px 1px"></div>
<svg class="a" style="left:562px;top:416px" width="12" height="15" viewBox="0 0 12 15"><rect x="0" y="0" width="12" height="15" fill="#fbe08c"/><rect x="0" y="0" width="12" height="15" fill="none" stroke="#f2cf6a" stroke-width="0.8"/><path d="M11.5 9V15" stroke="#e0b850" stroke-width="1"/><text x="2.3" y="12.3" font-family="Liberation Sans" font-weight="bold" font-size="13.5" fill="#000">?</text></svg>
<div class="t" style="left:581px;top:417px;">ssl</div>
<div class="a" style="left:550px;top:442px;width:11px;height:1px;background-image:linear-gradient(90deg,#808080 50%,transparent 50%);background-size:2px 1px"></div>
<svg class="a" style="left:562px;top:434px" width="12" height="15" viewBox="0 0 12 15"><rect x="0" y="0" width="12" height="15" fill="#fbe08c"/><rect x="0" y="0" width="12" height="15" fill="none" stroke="#f2cf6a" stroke-width="0.8"/><path d="M11.5 9V15" stroke="#e0b850" stroke-width="1"/><text x="2.3" y="12.3" font-family="Liberation Sans" font-weight="bold" font-size="13.5" fill="#000">?</text></svg>
<div class="t" style="left:581px;top:435px;">tmp</div>
<div class="a" style="left:543px;top:451px;width:12px;height:6px;overflow:hidden">
<svg class="a" style="left:0px;top:0px" width="12" height="15" viewBox="0 0 12 15"><rect x="0" y="0" width="12" height="15" fill="#fbe08c"/><rect x="0" y="0" width="12" height="15" fill="none" stroke="#f2cf6a" stroke-width="0.8"/><path d="M11.5 9V15" stroke="#e0b850" stroke-width="1"/><text x="2.3" y="12.3" font-family="Liberation Sans" font-weight="bold" font-size="13.5" fill="#000">?</text></svg>
</div>
<div class="a" style="left:562px;top:451px;width:20px;height:6px;overflow:hidden"><div class="t" style="left:0;top:2px">t</div></div>
<div class="a" style="left:1160px;top:234px;width:15px;height:223px;background:#f0f0f0"></div>
<div class="a" style="left:1160px;top:265px;width:15px;height:161px;background:#cdcdcd"></div>
<svg class="a" style="left:1163px;top:240px" width="8" height="5" viewBox="0 0 8 5"><path d="M0.8 4.5L4 1.2L7.2 4.5" stroke="#606060" stroke-width="1.5" fill="none"/></svg>
<svg class="a" style="left:1163px;top:446px" width="8" height="5" viewBox="0 0 8 5"><path d="M0.8 0.5L4 3.8L7.2 0.5" stroke="#606060" stroke-width="1.5" fill="none"/></svg>
<div class="a" style="left:0px;top:453px;width:474px;height:1px;background:#a0a0a0"></div>
<div class="a" style="left:0px;top:454px;width:473px;height:1px;background:#696969"></div>
<div class="a" style="left:481px;top:463px;width:693px;height:1px;background:#696969"></div>
<div class="a" style="left:0px;top:455px;width:473px;height:127px;background:#fff"></div>
<div class="a" style="left:115px;top:456px;width:1px;height:23px;background:#e5e5e5"></div>
<div class="a" style="left:195px;top:456px;width:1px;height:23px;background:#e5e5e5"></div>
<div class="a" style="left:295px;top:456px;width:1px;height:23px;background:#e5e5e5"></div>
<div class="a" style="left:415px;top:456px;width:1px;height:23px;background:#e5e5e5"></div>
<div class="t" style="left:2px;top:461px;">Filename</div>
<svg class="a" style="left:53px;top:456px" width="8" height="5" viewBox="0 0 8 5"><path d="M0.5 0.5L4 4L7.5 0.5" stroke="#909090" stroke-width="1" fill="none"/></svg>
<div class="t" style="right:984px;top:461px;">Filesize</div>
<div class="t" style="left:202px;top:461px;">Filetype</div>
<div class="t" style="left:302px;top:461px;letter-spacing:-0.2px">Last modified</div>
<svg class="a" style="left:2px;top:480px" width="12" height="15" viewBox="0 0 12 15"><rect x="0" y="0" width="12" height="15" fill="#fbe08c"/><rect x="0" y="0" width="12" height="15" fill="none" stroke="#f2cf6a" stroke-width="0.8"/><path d="M11.5 9V15" stroke="#e0b850" stroke-width="1"/></svg>
<div class="t" style="left:18px;top:483px;">..</div>
<svg class="a" style="left:0px;top:499px" width="16" height="16" viewBox="0 0 16 16"><rect x="4.5" y="0.5" width="11" height="15" fill="#fff" stroke="#8a8a8a"/><path d="M8 4H14M8 7H14M8 10H14M8 13H14" stroke="#a0a0a0"/><rect x="0" y="3" width="9" height="9" fill="#2b579a"/><text x="0.8" y="10.8" font-family="Liberation Sans" font-weight="bold" font-size="8" fill="#fff">W</text></svg>
<div class="t" style="left:18px;top:502px;letter-spacing:-0.1px">~$syWPGuideU...</div>
<div class="t" style="right:984px;top:502px;letter-spacing:-0.35px">162</div>
<div class="t" style="left:202px;top:502px;letter-spacing:-0.1px">Microsoft Wor...</div>
<div class="t" style="left:302px;top:502px;letter-spacing:-0.4px">1/22/2018 1:06:13</div>
<svg class="a" style="left:2px;top:518px" width="13" height="16" viewBox="0 0 13 16"><rect x="0.5" y="0.5" width="12" height="15" fill="#fff" stroke="#8a9aaa"/><rect x="2.5" y="3" width="8" height="8" fill="#1e78d0"/><path d="M3 10L6 6L8 8.5L10 7V10Z" fill="#bfe0ff"/></svg>
<div class="t" style="left:18px;top:521px;letter-spacing:-0.1px">wpblog.png</div>
<div class="t" style="right:984px;top:521px;letter-spacing:-0.35px">454,864</div>
<div class="t" style="left:202px;top:521px;letter-spacing:-0.1px">PNG File</div>
<div class="t" style="left:302px;top:521px;letter-spacing:-0.4px">7/18/2018 5:51:07</div>
<svg class="a" style="left:2px;top:537px" width="13" height="16" viewBox="0 0 13 16"><rect x="0.5" y="0.5" width="12" height="15" fill="#fff" stroke="#8a9aaa"/><rect x="2.5" y="3" width="8" height="8" fill="#1e78d0"/><path d="M3 10L6 6L8 8.5L10 7V10Z" fill="#bfe0ff"/></svg>
<div class="t" style="left:18px;top:540px;letter-spacing:-0.1px">WpBlog.jpg</div>
<div class="t" style="right:984px;top:540px;letter-spacing:-0.35px">137,130</div>
<div class="t" style="left:202px;top:540px;letter-spacing:-0.1px">JPG File</div>
<div class="t" style="left:302px;top:540px;letter-spacing:-0.4px">7/24/2018 4:25:17</div>
<svg class="a" style="left:2px;top:556px" width="13" height="16" viewBox="0 0 13 16"><rect x="0.5" y="0.5" width="12" height="15" fill="#fff" stroke="#8a9aaa"/><rect x="2.5" y="3" width="8" height="8" fill="#1e78d0"/><path d="M3 10L6 6L8 8.5L10 7V10Z" fill="#bfe0ff"/></svg>
<div class="t" style="left:18px;top:559px;letter-spacing:-0.1px">WP Homepage ...</div>
<div class="t" style="right:984px;top:559px;letter-spacing:-0.35px">2,459,216</div>
<div class="t" style="left:202px;top:559px;letter-spacing:-0.1px">JPG File</div>
<div class="t" style="left:302px;top:559px;letter-spacing:-0.4px">7/31/2018 4:42:45</div>
<svg class="a" style="left:2px;top:575px" width="13" height="16" viewBox="0 0 13 16"><rect x="0.5" y="0.5" width="12" height="15" fill="#fff" stroke="#8a9aaa"/><rect x="2.5" y="3" width="8" height="8" fill="#1e78d0"/><path d="M3 10L6 6L8 8.5L10 7V10Z" fill="#bfe0ff"/></svg>
<div class="t" style="left:18px;top:578px;letter-spacing:-0.1px">wp-header.png</div>
<div class="t" style="right:984px;top:578px;letter-spacing:-0.35px">39,885</div>
<div class="t" style="left:202px;top:578px;letter-spacing:-0.1px">JPG File</div>
<div class="t" style="left:302px;top:578px;letter-spacing:-0.4px">7/30/2018 3:37:48</div>
<div class="a" style="left:458px;top:455px;width:15px;height:127px;background:#f0f0f0"></div>
<div class="a" style="left:458px;top:472px;width:15px;height:16px;background:#cdcdcd"></div>
<svg class="a" style="left:461px;top:461px" width="8" height="5" viewBox="0 0 8 5"><path d="M0.8 4.5L4 1.2L7.2 4.5" stroke="#606060" stroke-width="1.5" fill="none"/></svg>
<svg class="a" style="left:461px;top:571px" width="8" height="5" viewBox="0 0 8 5"><path d="M0.8 0.5L4 3.8L7.2 0.5" stroke="#606060" stroke-width="1.5" fill="none"/></svg>
<div class="a" style="left:0px;top:582px;width:473px;height:23px;background:#f0f0f0"></div>
<div class="a" style="left:0px;top:582px;width:473px;height:1px;background:#e8e8e8"></div>
<div class="t" style="left:-4px;top:589px;letter-spacing:-0.25px">72 files and 19 directories. Total size: 15,191,561 bytes</div>
<div class="a" style="left:0px;top:605px;width:474px;height:1px;background:#fafafa"></div>
<div class="a" style="left:481px;top:464px;width:679px;height:118px;background:#fff"></div>
<div class="a" style="left:560px;top:465px;width:1px;height:23px;background:#e5e5e5"></div>
<div class="a" style="left:635px;top:465px;width:1px;height:23px;background:#e5e5e5"></div>
<div class="a" style="left:715px;top:465px;width:1px;height:23px;background:#e5e5e5"></div>
<div class="a" style="left:815px;top:465px;width:1px;height:23px;background:#e5e5e5"></div>
<div class="a" style="left:895px;top:465px;width:1px;height:23px;background:#e5e5e5"></div>
<div class="a" style="left:975px;top:465px;width:1px;height:23px;background:#e5e5e5"></div>
<svg class="a" style="left:518px;top:465px" width="8" height="5" viewBox="0 0 8 5"><path d="M0.5 4L4 0.5L7.5 4" stroke="#707070" stroke-width="1" fill="none"/></svg>
<div class="t" style="left:487px;top:471px;">Filename</div>
<div class="t" style="right:544px;top:471px;">Filesize</div>
<div class="t" style="left:642px;top:471px;">Filetype</div>
<div class="t" style="left:722px;top:471px;letter-spacing:-0.2px">Last modified</div>
<div class="t" style="left:822px;top:471px;letter-spacing:-0.2px">Permissions</div>
<div class="t" style="left:902px;top:471px;letter-spacing:-0.2px">Owner/Gro</div>
<svg class="a" style="left:487px;top:490px" width="12" height="15" viewBox="0 0 12 15"><rect x="0" y="0" width="12" height="15" fill="#fbe08c"/><rect x="0" y="0" width="12" height="15" fill="none" stroke="#f2cf6a" stroke-width="0.8"/><path d="M11.5 9V15" stroke="#e0b850" stroke-width="1"/></svg>
<div class="t" style="left:503px;top:493px;">..</div>
<svg class="a" style="left:487px;top:509px" width="12" height="15" viewBox="0 0 12 15"><rect x="0" y="0" width="12" height="15" fill="#fbe08c"/><rect x="0" y="0" width="12" height="15" fill="none" stroke="#f2cf6a" stroke-width="0.8"/><path d="M11.5 9V15" stroke="#e0b850" stroke-width="1"/></svg>
<div class="t" style="left:503px;top:512px;">wp-admin</div>
<div class="t" style="left:642px;top:512px;letter-spacing:-0.1px">File folder</div>
<div class="t" style="left:722px;top:512px;letter-spacing:-0.2px">4/4/2018 1:19:0...</div>
<div class="t" style="left:822px;top:512px;letter-spacing:-0.2px">drwxrwxr-x</div>
<div class="t" style="left:902px;top:512px;letter-spacing:-0.2px">gvkhcsenu...</div>
<svg class="a" style="left:487px;top:528px" width="12" height="15" viewBox="0 0 12 15"><rect x="0" y="0" width="12" height="15" fill="#fbe08c"/><rect x="0" y="0" width="12" height="15" fill="none" stroke="#f2cf6a" stroke-width="0.8"/><path d="M11.5 9V15" stroke="#e0b850" stroke-width="1"/></svg>
<div class="t" style="left:503px;top:531px;">wp-cont</div>
<div class="t" style="left:642px;top:531px;letter-spacing:-0.1px">File folder</div>
<div class="t" style="left:722px;top:531px;letter-spacing:-0.2px">8/6/2018 10:59:...</div>
<div class="t" style="left:822px;top:531px;letter-spacing:-0.2px">drwxrwxr-x</div>
<div class="t" style="left:902px;top:531px;letter-spacing:-0.2px">gvkhcsenu...</div>
<svg class="a" style="left:487px;top:547px" width="12" height="15" viewBox="0 0 12 15"><rect x="0" y="0" width="12" height="15" fill="#fbe08c"/><rect x="0" y="0" width="12" height="15" fill="none" stroke="#f2cf6a" stroke-width="0.8"/><path d="M11.5 9V15" stroke="#e0b850" stroke-width="1"/></svg>
<div class="t" style="left:503px;top:550px;">wp-inclu</div>
<div class="t" style="left:642px;top:550px;letter-spacing:-0.1px">File folder</div>
<div class="t" style="left:722px;top:550px;letter-spacing:-0.2px">4/4/2018 1:19:0...</div>
<div class="t" style="left:822px;top:550px;letter-spacing:-0.2px">drwxrwxr-x</div>
<div class="t" style="left:902px;top:550px;letter-spacing:-0.2px">gvkhcsenu...</div>
<svg class="a" style="left:486px;top:566px" width="14" height="16" viewBox="0 0 14 16"><path d="M2.5 1.5H13V15H1Z" fill="#a6d2dc"/><path d="M3 4H12M2.8 6.5H12M2.6 9H12M2.4 11.5H12" stroke="#c8e6ec" stroke-width="1"/><path d="M1 15H13" stroke="#6a7a80" stroke-width="1"/><path d="M12.5 2V15" stroke="#8aa0a8" stroke-width="0.8"/><path d="M3 1.5H12.5" stroke="#333" stroke-width="1.2" stroke-dasharray="1.2 0.9"/></svg>
<div class="t" style="left:503px;top:569px;">.htaccess</div>
<div class="t" style="right:544px;top:569px;">372</div>
<div class="t" style="left:642px;top:569px;letter-spacing:-0.6px">HTACCESS...</div>
<div class="a" style="left:1160px;top:464px;width:15px;height:118px;background:#f0f0f0"></div>
<div class="a" style="left:1160px;top:482px;width:15px;height:17px;background:#cdcdcd"></div>
<svg class="a" style="left:1163px;top:470px" width="8" height="5" viewBox="0 0 8 5"><path d="M0.8 4.5L4 1.2L7.2 4.5" stroke="#606060" stroke-width="1.5" fill="none"/></svg>
<svg class="a" style="left:1163px;top:571px" width="8" height="5" viewBox="0 0 8 5"><path d="M0.8 0.5L4 3.8L7.2 0.5" stroke="#606060" stroke-width="1.5" fill="none"/></svg>
<div class="a" style="left:481px;top:582px;width:693px;height:23px;background:#f0f0f0"></div>
<div class="a" style="left:481px;top:582px;width:693px;height:1px;background:#e8e8e8"></div>
<div class="t" style="left:484px;top:589px;letter-spacing:-0.2px">19 files and 3 directories. Total size: 151,871 bytes</div>
<div class="a" style="left:479px;top:605px;width:695px;height:1px;background:#fafafa"></div>
<div class="a" style="left:0px;top:611px;width:1174px;height:1px;background:#6a6a6a"></div>
<div class="a" style="left:0px;top:612px;width:1174px;height:31px;background:#fff"></div>
<div class="a" style="left:175px;top:613px;width:1px;height:24px;background:#e5e5e5"></div>
<div class="a" style="left:235px;top:613px;width:1px;height:24px;background:#e5e5e5"></div>
<div class="a" style="left:415px;top:613px;width:1px;height:24px;background:#e5e5e5"></div>
<div class="a" style="left:495px;top:613px;width:1px;height:24px;background:#e5e5e5"></div>
<div class="a" style="left:555px;top:613px;width:1px;height:24px;background:#e5e5e5"></div>
<div class="a" style="left:705px;top:613px;width:1px;height:24px;background:#e5e5e5"></div>
<div class="t" style="left:3px;top:619px;letter-spacing:-0.2px">Server/Local file</div>
<div class="t" style="left:182px;top:619px;letter-spacing:-0.2px">Direction</div>
<div class="t" style="left:242px;top:619px;letter-spacing:-0.2px">Remote file</div>
<div class="t" style="right:684px;top:619px;">Size</div>
<div class="t" style="left:502px;top:619px;letter-spacing:-0.2px">Priority</div>
<div class="t" style="left:562px;top:619px;letter-spacing:-0.2px">Status</div>
<svg class="a" style="left:900px;top:580px" width="274" height="63" viewBox="0 0 274 63"><defs><filter id="thin" x="-10%" y="-10%" width="120%" height="120%"><feMorphology operator="erode" radius="0.6 0"/></filter></defs><g filter="url(#thin)" fill="rgb(226,92,92)" fill-opacity="0.8" font-family="Liberation Serif" font-size="54"><text x="0" y="0" text-anchor="middle" transform="translate(30.6,50) scale(1.35,1)">t</text><text x="0" y="0" text-anchor="middle" transform="translate(59.0,50) scale(1.1,1)">a</text><text x="0" y="0" text-anchor="middle" transform="translate(86.4,50) scale(1.0,1)">d</text><text x="0" y="0" text-anchor="middle" transform="translate(113.2,50) scale(0.85,1)">k</text><text x="0" y="0" text-anchor="middle" transform="translate(138.2,50) scale(1.15,1)">e</text><text x="0" y="0" text-anchor="middle" transform="translate(160.0,50) scale(1.0,1)">.</text><text x="0" y="0" text-anchor="middle" transform="translate(194.3,50) scale(1.05,1)">c</text><text x="0" y="0" text-anchor="middle" transform="translate(220.5,50) scale(0.95,1)">o</text><text x="0" y="0" text-anchor="middle" transform="translate(246.8,50) scale(0.68,1)">m</text></g></svg>
</body></html>
